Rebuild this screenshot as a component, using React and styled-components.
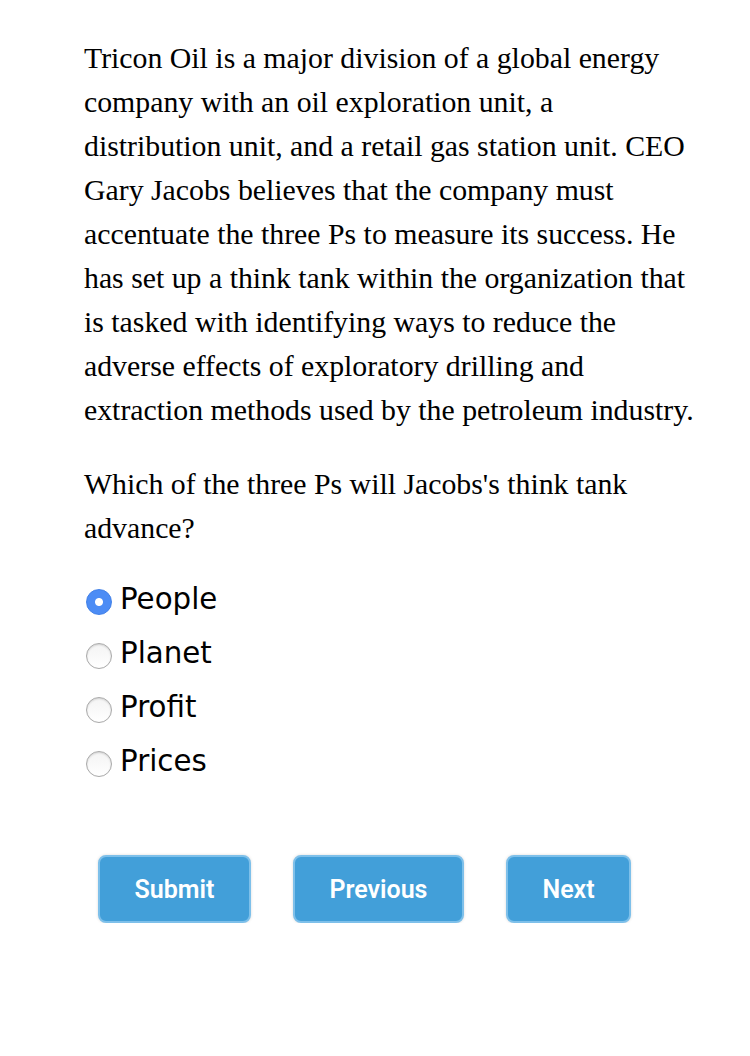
import React, { useState } from 'react';
import styled, { createGlobalStyle } from 'styled-components';

const Global = createGlobalStyle`
  body {
    margin: 0;
    background: #fff;
  }
`;

const Page = styled.div`
  padding: 36px 0 0 84px;
  width: 614px;
`;

const Passage = styled.p`
  margin: 0;
  font-family: "Liberation Serif", "Times New Roman", serif;
  font-size: 29.8px;
  line-height: 44px;
  color: #000;
`;

const Question = styled(Passage)`
  margin-top: 30px;
`;

const Options = styled.div`
  display: flex;
  flex-direction: column;
  margin-top: 29px;
  gap: 14px;
`;

const Option = styled.label`
  display: flex;
  align-items: center;
  gap: 8px;
  height: 40px;
  font-family: "DejaVu Sans", Verdana, sans-serif;
  font-size: 29.3px;
  color: #000;
  cursor: pointer;
`;

const Radio = styled.input`
  appearance: none;
  margin: 6px 0 0 2px;
  width: 26px;
  height: 26px;
  border-radius: 50%;
  box-sizing: border-box;
  border: 1px solid ${p => (p.checked ? '#3f7fe8' : '#a9a9a9')};
  background: ${p =>
    p.checked
      ? 'radial-gradient(circle, #fff 0 3.5px, #4c8cf5 4.5px)'
      : 'linear-gradient(#f4f4f4, #fff)'};
  box-shadow: ${p => (p.checked ? 'none' : 'inset 0 1px 2px rgba(0,0,0,0.15)')};
  cursor: pointer;
`;

const Buttons = styled.div`
  display: flex;
  gap: 42px;
  margin: 74px 0 0 14px;
`;

const Button = styled.button`
  height: 68px;
  padding: 0 34.5px;
  border: 2px solid #7ec0ea;
  border-radius: 8px;
  background: #429fd9;
  color: #fff;
  font-family: Roboto, "Liberation Sans", Arial, sans-serif;
  font-weight: 600;
  font-size: 25px;
  box-shadow: 0 0 3px rgba(0, 0, 0, 0.15);
  cursor: pointer;
`;

const choices = ['People', 'Planet', 'Profit', 'Prices'];

export default function App() {
  const [answer, setAnswer] = useState('People');
  return (
    <Page>
      <Global />
      <Passage>
        Tricon Oil is a major division of a global energy company with an oil
        exploration unit, a distribution unit, and a retail gas station unit.
        CEO Gary Jacobs believes that the company must accentuate the three Ps
        to measure its success. He has set up a think tank within the
        organization that is tasked with identifying ways to reduce the adverse
        effects of exploratory drilling and extraction methods used by the
        petroleum industry.
      </Passage>
      <Question>Which of the three Ps will Jacobs's think tank advance?</Question>
      <Options>
        {choices.map(c => (
          <Option key={c}>
            <Radio
              type="radio"
              name="threeps"
              checked={answer === c}
              onChange={() => setAnswer(c)}
            />
            {c}
          </Option>
        ))}
      </Options>
      <Buttons>
        <Button>Submit</Button>
        <Button>Previous</Button>
        <Button>Next</Button>
      </Buttons>
    </Page>
  );
}
